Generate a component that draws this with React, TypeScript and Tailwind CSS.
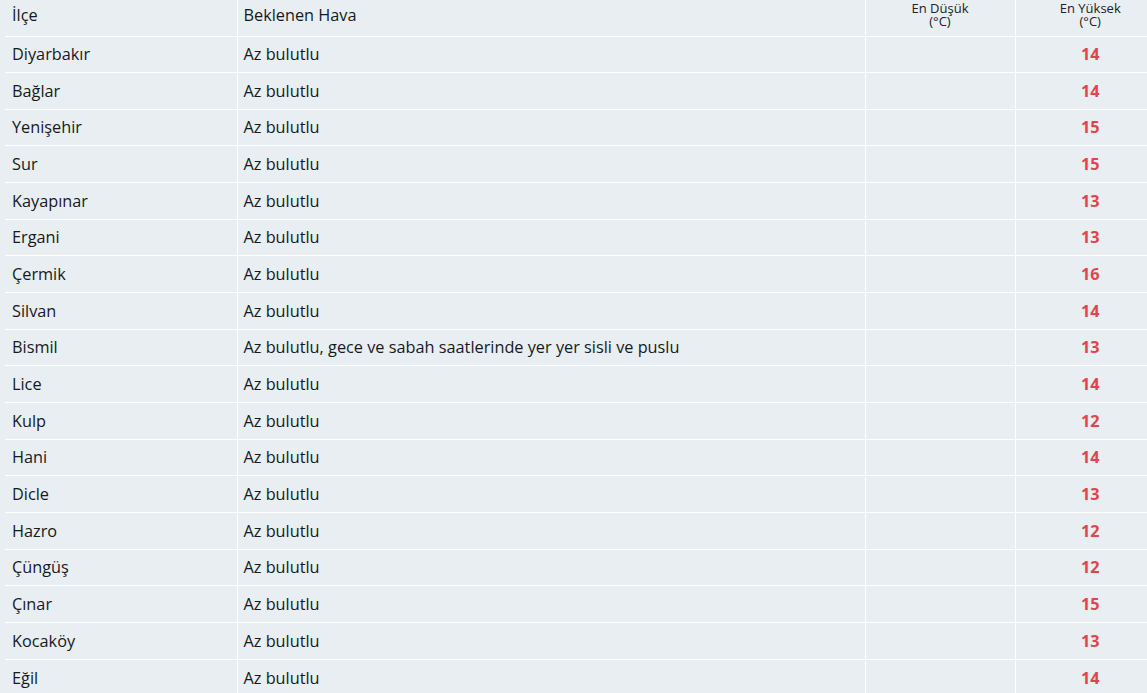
const rows: [string, string, number][] = [
  ["Diyarbakır", "Az bulutlu", 14],
  ["Bağlar", "Az bulutlu", 14],
  ["Yenişehir", "Az bulutlu", 15],
  ["Sur", "Az bulutlu", 15],
  ["Kayapınar", "Az bulutlu", 13],
  ["Ergani", "Az bulutlu", 13],
  ["Çermik", "Az bulutlu", 16],
  ["Silvan", "Az bulutlu", 14],
  ["Bismil", "Az bulutlu, gece ve sabah saatlerinde yer yer sisli ve puslu", 13],
  ["Lice", "Az bulutlu", 14],
  ["Kulp", "Az bulutlu", 12],
  ["Hani", "Az bulutlu", 14],
  ["Dicle", "Az bulutlu", 13],
  ["Hazro", "Az bulutlu", 12],
  ["Çüngüş", "Az bulutlu", 12],
  ["Çınar", "Az bulutlu", 15],
  ["Kocaköy", "Az bulutlu", 13],
  ["Eğil", "Az bulutlu", 14],
];

export default function App() {
  return (
    <main
      className="h-[693px] w-[1147px] overflow-hidden bg-[#e8eef1] pl-[5px] text-[#151a22]"
      style={{ fontFamily: '"Open Sans", "Noto Sans", sans-serif' }}
    >
      <table className="w-[1160px] table-fixed border-collapse">
        <colgroup>
          <col className="w-[232px]" />
          <col className="w-[628px]" />
          <col className="w-[150px]" />
          <col className="w-[150px]" />
        </colgroup>
        <thead>
          <tr className="h-[36px]">
            <th className="px-[7px] pb-[6px] text-left align-middle text-[16.3px] font-normal">
              İlçe
            </th>
            <th className="border-l border-white px-[6px] pb-[6px] text-left align-middle text-[16.3px] font-normal">
              Beklenen Hava
            </th>
            <th className="border-l border-white pb-[6px] text-center align-middle text-[13px] font-normal text-[#222]">
              <span className="block leading-[13px]">En Düşük</span>
              <span className="block leading-[13px]">(°C)</span>
            </th>
            <th className="border-l border-white pb-[6px] text-center align-middle text-[13px] font-normal text-[#222]">
              <span className="block leading-[13px]">En Yüksek</span>
              <span className="block leading-[13px]">(°C)</span>
            </th>
          </tr>
        </thead>
        <tbody>
          {rows.map(([name, weather, max]) => (
            <tr key={name} className="h-[36.67px] border-t border-white">
              <td className="px-[7px] text-[16.3px]">{name}</td>
              <td className="border-l border-white px-[6px] text-[16.3px]">{weather}</td>
              <td className="border-l border-white"></td>
              <td className="border-l border-white text-center text-[16.3px] font-bold text-[#e0454d]">
                {max}
              </td>
            </tr>
          ))}
        </tbody>
      </table>
    </main>
  );
}
